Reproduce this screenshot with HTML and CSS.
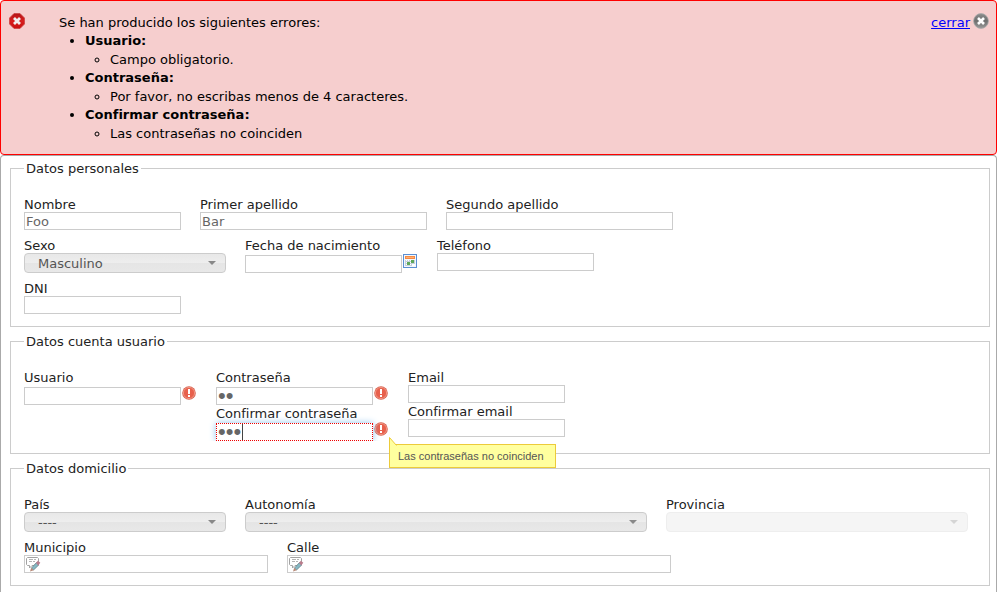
FILE: index.html
```html
<!DOCTYPE html>
<html lang="es">
<head>
<meta charset="utf-8">
<title>Alta de usuario</title>
<link rel="stylesheet" href="styles.css">
</head>
<body>
<svg class="defs" aria-hidden="true">
  <defs>
    <linearGradient id="redFill" x1="0" y1="0" x2="0" y2="1"><stop offset="0" stop-color="#b51418"/><stop offset=".5" stop-color="#d81e1e"/><stop offset="1" stop-color="#c80f10"/></linearGradient>
    <linearGradient id="grayFill" x1="0" y1="0" x2="0" y2="1"><stop offset="0" stop-color="#8c8c8c"/><stop offset=".5" stop-color="#6f6f6f"/><stop offset="1" stop-color="#9a9a9a"/></linearGradient>
  </defs>
  <symbol id="alert" viewBox="0 0 14 14">
    <circle cx="7" cy="7" r="6.8" fill="#d9614f"/>
    <circle cx="7" cy="7" r="5.6" fill="#e8604c" stroke="#f3a392" stroke-width=".8"/>
    <path d="M6 3h2v5H6zM6 9h2v2H6z" fill="#fff"/>
  </symbol>
  <symbol id="note" viewBox="0 0 16 16">
    <path d="M2.500 1.500h10l1 1v6l-1 1H7l-2.500 2.500V9.500h-2l-1-1v-6z" fill="#fff" stroke="#a3a3a3"/>
    <path d="M4 3.500h4M9 3.500h2M4 5.500h3M8 5.500h2" stroke="#b5b5b5"/>
    <path d="M6.500 12l5-5.500 2.500 2.200-5.500 5.300z" fill="#86b9c4" stroke="#64818a" stroke-width=".8"/>
    <path d="M11 7l1.800-2.200 2.500 2-2.100 2.600z" fill="#b97c8c"/>
    <path d="M5 15.500l1.200-3.700 2.600 2.400z" fill="#b88a78"/>
  </symbol>
</svg>

<section class="errors" role="alert">
  <svg class="icon-16" viewBox="0 0 16 16" aria-hidden="true">
    <path d="M5 .5h6L15.500 5v6L11 15.500H5L.5 11V5z" fill="url(#redFill)" stroke="#c44" stroke-width=".8" stroke-linejoin="round"/>
    <path d="M5 5l6 6M11 5l-6 6" stroke="#f1eeee" stroke-width="2.800"/>
  </svg>
  <div class="errors-body">
    <p class="errors-title">Se han producido los siguientes errores:</p>
    <ul class="errors-list">
      <li><strong>Usuario:</strong><ul><li>Campo obligatorio.</li></ul></li>
      <li><strong>Contraseña:</strong><ul><li>Por favor, no escribas menos de 4 caracteres.</li></ul></li>
      <li><strong>Confirmar contraseña:</strong><ul><li>Las contraseñas no coinciden</li></ul></li>
    </ul>
  </div>
  <div class="errors-close">
    <a href="#">cerrar</a>
    <svg class="icon-16" viewBox="0 0 16 16" aria-hidden="true">
      <circle cx="8" cy="8" r="7.400" fill="url(#grayFill)" stroke="#aaa" stroke-width=".8"/>
      <path d="M5 5l6 6M11 5l-6 6" stroke="#fff" stroke-width="2.600"/>
    </svg>
  </div>
</section>

<form class="panel">
  <fieldset class="group">
    <legend>Datos personales</legend>
    <div class="rows">
      <div class="row">
        <div class="field"><label for="nombre">Nombre</label><input class="text w-s" id="nombre" type="text" value="Foo"></div>
        <div class="field"><label for="ape1">Primer apellido</label><input class="text w-m" id="ape1" type="text" value="Bar"></div>
        <div class="field"><label for="ape2">Segundo apellido</label><input class="text w-m" id="ape2" type="text"></div>
      </div>
      <div class="row">
        <div class="field"><label for="sexo">Sexo</label>
          <div class="pick pick-s"><select id="sexo"><option>Masculino</option><option>Femenino</option></select></div></div>
        <div class="field"><label for="fecha">Fecha de nacimiento</label>
          <div class="with-icon"><input class="text w-s" id="fecha" type="text">
            <button class="icon-btn" type="button" aria-label="Abrir calendario">
              <svg class="icon-14" viewBox="0 0 14 14" aria-hidden="true">
                <rect x=".5" y=".5" width="13" height="13" fill="#f3f8fe" stroke="#5b8fd2"/>
                <path d="M2 2h10v3H2z" fill="#f58a45"/><path d="M3 3h8v1H3z" fill="#ffb070"/>
                <path d="M2 6h10v6H2z" fill="#c5d0dd"/>
                <path d="M3 6h1v1H3zM5 6h1v1H5zM7 6h1v1H7zM9 6h1v1H9zM3 8h1v1H3zM5 8h1v1H5zM7 8h1v1H7zM3 10h1v1H3zM7 10h1v1H7zM9 10h3v2H9z" fill="#fff"/>
                <path d="M8 6h3v3H8zM4 8h3v3H4z" fill="#5fa85a"/>
              </svg></button></div></div>
        <div class="field"><label for="tel">Teléfono</label><input class="text w-s" id="tel" type="tel"></div>
      </div>
      <div class="row">
        <div class="field"><label for="dni">DNI</label><input class="text w-s" id="dni" type="text"></div>
      </div>
    </div>
  </fieldset>

  <fieldset class="group">
    <legend>Datos cuenta usuario</legend>
    <div class="row">
      <div class="field"><label for="usuario">Usuario</label>
        <div class="with-icon"><input class="text w-s" id="usuario" type="text"><svg class="icon-14" aria-hidden="true"><use href="#alert"/></svg></div></div>
      <div class="stack">
        <div class="field"><label for="pass">Contraseña</label>
          <div class="with-icon"><input class="text w-s secret" id="pass" type="password" value="ab"><svg class="icon-14" aria-hidden="true"><use href="#alert"/></svg></div></div>
        <div class="field"><label for="pass2">Confirmar contraseña</label>
          <div class="with-icon"><input class="text w-s secret active" id="pass2" type="password" value="abc" aria-describedby="tip"><span class="caret"></span><svg class="icon-14" aria-hidden="true"><use href="#alert"/></svg>
            <div class="tip" id="tip" role="tooltip">Las contraseñas no coinciden
              <svg class="tip-tail" viewBox="0 0 8 9" aria-hidden="true"><path d="M.5 9V.5L7.500 8.500V9z" fill="#ffff9f"/><path d="M.5 9V.5L7.500 8.500" fill="none" stroke="#eccb3a"/></svg></div></div></div>
      </div>
      <div class="stack">
        <div class="field"><label for="email">Email</label><input class="text w-s" id="email" type="email"></div>
        <div class="field"><label for="email2">Confirmar email</label><input class="text w-s" id="email2" type="email"></div>
      </div>
    </div>
  </fieldset>

  <fieldset class="group">
    <legend>Datos domicilio</legend>
    <div class="rows">
      <div class="row">
        <div class="field"><label for="pais">País</label>
          <div class="pick pick-s"><select id="pais"><option>----</option></select></div></div>
        <div class="field"><label for="auto">Autonomía</label>
          <div class="pick pick-l"><select id="auto"><option>----</option></select></div></div>
        <div class="field"><label for="prov">Provincia</label>
          <div class="pick pick-m off"><select id="prov" disabled><option></option></select></div></div>
      </div>
      <div class="row">
        <div class="field"><label for="muni">Municipio</label>
          <div class="noted w-244"><svg class="note" aria-hidden="true"><use href="#note"/></svg><input id="muni" type="text"></div></div>
        <div class="field"><label for="calle">Calle</label>
          <div class="noted w-384"><svg class="note" aria-hidden="true"><use href="#note"/></svg><input id="calle" type="text"></div></div>
      </div>
    </div>
  </fieldset>
</form>
</body>
</html>
```
FILE: styles.css
```css
* { box-sizing: border-box; }

body {
  margin: 0 7px 0 0;
  min-height: 100vh;
  display: flex;
  flex-direction: column;
  background: #fff;
  color: #222;
  font: 13px/16px "DejaVu Sans", sans-serif;
}

input, select, button { font: inherit; margin: 0; }
svg { display: block; flex: none; }
.defs { position: absolute; width: 0; height: 0; }
.icon-16 { width: 16px; height: 16px; }
.icon-14 { width: 14px; height: 14px; }

/* Error summary */
.errors {
  display: flex;
  align-items: flex-start;
  padding: 12px 7px 11px 8px;
  border: 1px solid #f00;
  border-radius: 4px;
  background: #f6cece;
  color: #000;
  line-height: 18px;
}
.errors-body { flex: 1; padding: 1px 0 0 34px; }
.errors-title { margin: 0; }
.errors-list { margin: 0; padding-left: 26px; list-style: disc; }
.errors-list ul { margin: 0; padding-left: 25px; list-style: circle; line-height: 19px; }
.errors-close { display: flex; gap: 3px; }
.errors-close a { padding-top: 1px; color: #00f; }

/* Form */
.panel {
  flex: 1;
  padding: 3px 6px 0 9px;
  border: 1px solid #aaa;
  border-bottom: 0;
  border-radius: 4px 4px 0 0;
}
.group {
  min-width: 0;
  margin: 0 0 5px;
  padding: 19px 13px 12px;
  border: 1px solid #ccc;
}
.group legend { height: 18px; padding: 0 2px; line-height: 20px; }
.rows { display: flex; flex-direction: column; gap: 7px; }
.row { display: flex; flex-wrap: wrap; align-items: flex-start; column-gap: 19px; }
.field, .stack { display: flex; flex-direction: column; align-items: flex-start; max-width: 100%; }
.field label { height: 16px; line-height: 18px; }

.text {
  height: 18px;
  padding: 0 1px;
  border: 1px solid #ccc;
  background: #fff;
  color: #666;
  max-width: 100%;
  outline: 0;
}
.w-s { width: 157px; }
.w-m { width: 227px; }
.w-244 { width: 244px; }
.w-384 { width: 384px; }
.secret { font: 22px/16px "Liberation Sans", Arial, sans-serif; }

.with-icon {
  position: relative;
  display: flex;
  align-items: center;
  gap: 1px;
  padding: 2px 1px 0 0;
}
.with-icon > .icon-14, .icon-btn { align-self: flex-start; margin-top: -1px; }
.icon-btn { padding: 0; border: 0; background: none; cursor: pointer; }
.active {
  border: 1px dotted #e00;
  box-shadow: 0 0 7px #8fc4ee;
  clip-path: inset(-8px -8px 0 -8px);
}
.caret { position: absolute; left: 26px; top: 3px; width: 1px; height: 16px; background: #444; }

.tip {
  position: absolute;
  left: 173px;
  top: 23px;
  padding: 3px 11px 3px 8px;
  border: 1px solid #eccb3a;
  background: #ffff9f;
  color: #555;
  font: 11px/16px "Liberation Sans", Arial, sans-serif;
  white-space: nowrap;
}
.tip-tail { position: absolute; left: -1px; top: -8px; width: 8px; height: 9px; }

.pick { position: relative; max-width: 100%; }
.pick-s { width: 202px; }
.pick-m { width: 302px; }
.pick-l { width: 402px; }
.pick select {
  appearance: none;
  display: block;
  width: 100%;
  height: 20px;
  padding: 1px 24px 0 13px;
  border: 1px solid #ccc;
  border-radius: 4px;
  background: linear-gradient(#e8e8e8, #eee 50%, #e5e5e5 52%, #e8e8e8);
  color: #555;
  opacity: 1;
}
.pick::after {
  content: "";
  position: absolute;
  right: 10px;
  top: 8px;
  border: 4px solid transparent;
  border-top-color: #888;
  border-bottom: 0;
  pointer-events: none;
}
.pick.off select { border-color: #eee; background: #f5f5f5; }
.pick.off::after { border-top-color: #d5d5d5; }

.noted {
  display: flex;
  align-items: center;
  height: 18px;
  max-width: 100%;
  border: 1px solid #ccc;
  background: #fff;
}
.note { width: 16px; height: 16px; }
.noted input { flex: 1; min-width: 0; height: 16px; padding: 0 2px; border: 0; background: none; color: #666; outline: 0; }
```
